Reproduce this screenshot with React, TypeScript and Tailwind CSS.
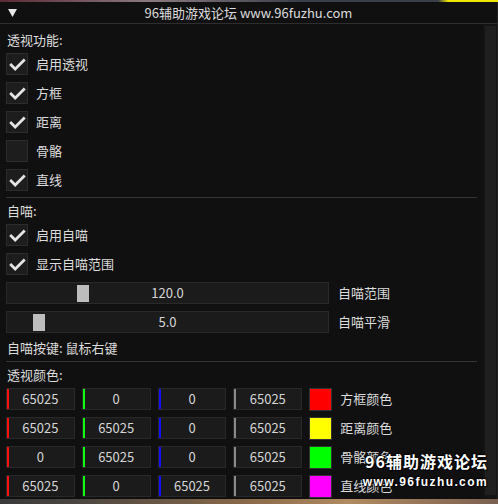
import React from "react"

const font = { fontFamily: '"Noto Sans CJK SC", "Noto Sans", sans-serif' }

function Check({ on, label }: { on: boolean; label: string }) {
    return (
        <div className="flex items-center h-[22px] mt-[7px]">
            <div className="w-[22px] h-[22px] bg-[#1d1d1d] border border-[#2c2c2c] flex items-center justify-center">
                {on && (
                    <svg width="22" height="22" viewBox="0 0 22 22">
                        <polyline points="3.5,11 9,16.5 19.5,6" fill="none" stroke="#e4e4e4" strokeWidth="3" />
                    </svg>
                )}
            </div>
            <span className="ml-[8px] text-[13px] leading-[16px] text-[#dcdcdc]">{label}</span>
        </div>
    )
}

function Slider({ value, pos, label }: { value: string; pos: string; label: string }) {
    return (
        <div className="flex items-center h-[22px] mt-[7px]">
            <div className="relative w-[323px] h-[22px] bg-[#1b1b1b] border border-[#292929] flex items-center justify-center">
                <div className={`absolute top-[2px] w-[12px] h-[17px] bg-[#bdbdbd] ${pos}`} />
                <span className="relative text-[13px] leading-[16px] text-[#d6d6d6]">{value}</span>
            </div>
            <span className="ml-[9px] text-[13px] leading-[16px] text-[#dcdcdc]">{label}</span>
        </div>
    )
}

function Num({ v, bar }: { v: string; bar: string }) {
    return (
        <div className="relative w-[68.8px] h-[22px] bg-[#1b1b1b] border border-[#292929] flex items-center justify-center">
            <div className={`absolute left-0 top-0 w-[2px] h-[20px] ${bar}`} />
            <span className="text-[13px] leading-[16px] text-[#d6d6d6]">{v}</span>
        </div>
    )
}

function ColorRow({ vals, swatch, label }: { vals: string[]; swatch: string; label: string }) {
    const bars = ["bg-[#ff1010]", "bg-[#10ff10]", "bg-[#1010ff]", "bg-[#8a8a8a]"]
    return (
        <div className="flex items-center gap-[7px] h-[22px] mt-[7px]">
            {vals.map((v, i) => (
                <Num key={i} v={v} bar={bars[i]} />
            ))}
            <div className={`w-[23px] h-[23px] border border-[#333] ${swatch}`} />
            <span className="ml-[1px] text-[13px] leading-[16px] text-[#dcdcdc]">{label}</span>
        </div>
    )
}

function Label({ text, mt }: { text: string; mt: string }) {
    return <div className={`h-[16px] text-[13px] leading-[16px] text-[#dcdcdc] ${mt}`}>{text}</div>
}

export default function App() {
    return (
        <div className="relative w-[498px] h-[504px] flex flex-col overflow-hidden bg-[#3a3230]" style={font}>
            <div className="h-[2px] bg-[linear-gradient(90deg,#5a2a35_0%,#8a7a80_30%,#3b3f4a_60%,#3b3f4a_88%,#f0e800_90%,#f0e800_100%)]" />
            <div className="flex flex-col h-[497px] bg-[#101010] border-r border-[#222]">
                <div className="relative h-[22px] flex items-center justify-center border-b border-[#2e2e2e]">
                    <svg className="absolute left-[8px] top-[7px]" width="9" height="8" viewBox="0 0 9 8">
                        <polygon points="0,0 9,0 4.5,8" fill="#e8e8e8" />
                    </svg>
                    <span className="text-[13px] leading-[16px] text-[#dcdcdc]">96辅助游戏论坛 www.96fuzhu.com</span>
                </div>
                <div className="flex flex-1">
                    <div className="flex-1 flex flex-col pl-[6px] pr-[6px]">
                        <Label text="透视功能:" mt="mt-[8px] ml-[1px]" />
                        <div className="-mt-[2px]" />
                        <Check on label="启用透视" />
                        <Check on label="方框" />
                        <Check on label="距离" />
                        <Check on={false} label="骨骼" />
                        <Check on label="直线" />
                        <div className="h-[1px] mt-[6px] bg-[#353535]" />
                        <Label text="自喵:" mt="mt-[5px] ml-[1px]" />
                        <div className="-mt-[2px]" />
                        <Check on label="启用自喵" />
                        <Check on label="显示自喵范围" />
                        <Slider value="120.0" pos="left-[70px]" label="自喵范围" />
                        <Slider value="5.0" pos="left-[26px]" label="自喵平滑" />
                        <Label text="自喵按键: 鼠标右键" mt="mt-[7px] ml-[1px]" />
                        <div className="h-[1px] mt-[5px] bg-[#353535]" />
                        <Label text="透视颜色:" mt="mt-[5px] ml-[1px]" />
                        <div className="-mt-[2px]" />
                        <ColorRow vals={["65025", "0", "0", "65025"]} swatch="bg-[#ff0000]" label="方框颜色" />
                        <ColorRow vals={["65025", "65025", "0", "65025"]} swatch="bg-[#ffff00]" label="距离颜色" />
                        <ColorRow vals={["0", "65025", "0", "65025"]} swatch="bg-[#00ff00]" label="骨骼颜色" />
                        <ColorRow vals={["65025", "0", "65025", "65025"]} swatch="bg-[#ff00ff]" label="直线颜色" />
                    </div>
                    <div className="w-[14px] bg-[#141414] pt-[2px] pb-[4px] flex justify-center">
                        <div className="w-[11px] h-full bg-[#1f1f1f]" />
                    </div>
                </div>
            </div>
            <div className="flex-1 bg-[linear-gradient(90deg,#3a3a3a_0%,#4a4540_15%,#8a6a4a_50%,#b08a60_70%,#7a6050_100%)]" />
            <div className="absolute right-[10px] top-[452px] w-[116px] flex flex-col items-end font-bold text-white whitespace-nowrap [text-shadow:0_0_2px_#000,1px_1px_1px_#000,-1px_-1px_1px_#000]">
                <span className="text-[16px] leading-[18px] tracking-[1px]">96辅助游戏论坛</span>
                <span className="text-[12px] leading-[14px] mt-[5px] tracking-[1.4px]" style={{ fontFamily: '"Liberation Sans", sans-serif' }}>www.96fuzhu.com</span>
            </div>
        </div>
    )
}
